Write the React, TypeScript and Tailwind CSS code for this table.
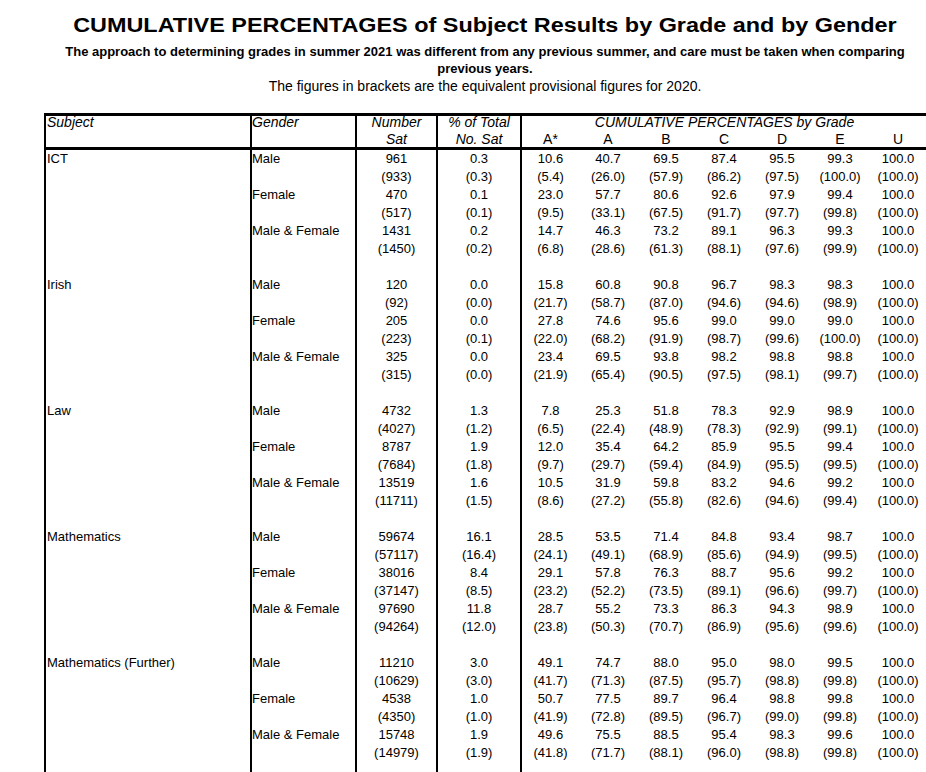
type Line = { sat: string; pct: string; grades: string[] }
type GenderRow = { gender: string; now: Line; prev: Line }
type Group = { subject: string; rows: GenderRow[] }

const mk = (sat: string, pct: string, g: string) => ({ sat, pct, grades: g.split(" ") })

const groups: Group[] = [
  {
    subject: "ICT",
    rows: [
      { gender: "Male", now: mk("961", "0.3", "10.6 40.7 69.5 87.4 95.5 99.3 100.0"), prev: mk("(933)", "(0.3)", "(5.4) (26.0) (57.9) (86.2) (97.5) (100.0) (100.0)") },
      { gender: "Female", now: mk("470", "0.1", "23.0 57.7 80.6 92.6 97.9 99.4 100.0"), prev: mk("(517)", "(0.1)", "(9.5) (33.1) (67.5) (91.7) (97.7) (99.8) (100.0)") },
      { gender: "Male & Female", now: mk("1431", "0.2", "14.7 46.3 73.2 89.1 96.3 99.3 100.0"), prev: mk("(1450)", "(0.2)", "(6.8) (28.6) (61.3) (88.1) (97.6) (99.9) (100.0)") },
    ],
  },
  {
    subject: "Irish",
    rows: [
      { gender: "Male", now: mk("120", "0.0", "15.8 60.8 90.8 96.7 98.3 98.3 100.0"), prev: mk("(92)", "(0.0)", "(21.7) (58.7) (87.0) (94.6) (94.6) (98.9) (100.0)") },
      { gender: "Female", now: mk("205", "0.0", "27.8 74.6 95.6 99.0 99.0 99.0 100.0"), prev: mk("(223)", "(0.1)", "(22.0) (68.2) (91.9) (98.7) (99.6) (100.0) (100.0)") },
      { gender: "Male & Female", now: mk("325", "0.0", "23.4 69.5 93.8 98.2 98.8 98.8 100.0"), prev: mk("(315)", "(0.0)", "(21.9) (65.4) (90.5) (97.5) (98.1) (99.7) (100.0)") },
    ],
  },
  {
    subject: "Law",
    rows: [
      { gender: "Male", now: mk("4732", "1.3", "7.8 25.3 51.8 78.3 92.9 98.9 100.0"), prev: mk("(4027)", "(1.2)", "(6.5) (22.4) (48.9) (78.3) (92.9) (99.1) (100.0)") },
      { gender: "Female", now: mk("8787", "1.9", "12.0 35.4 64.2 85.9 95.5 99.4 100.0"), prev: mk("(7684)", "(1.8)", "(9.7) (29.7) (59.4) (84.9) (95.5) (99.5) (100.0)") },
      { gender: "Male & Female", now: mk("13519", "1.6", "10.5 31.9 59.8 83.2 94.6 99.2 100.0"), prev: mk("(11711)", "(1.5)", "(8.6) (27.2) (55.8) (82.6) (94.6) (99.4) (100.0)") },
    ],
  },
  {
    subject: "Mathematics",
    rows: [
      { gender: "Male", now: mk("59674", "16.1", "28.5 53.5 71.4 84.8 93.4 98.7 100.0"), prev: mk("(57117)", "(16.4)", "(24.1) (49.1) (68.9) (85.6) (94.9) (99.5) (100.0)") },
      { gender: "Female", now: mk("38016", "8.4", "29.1 57.8 76.3 88.7 95.6 99.2 100.0"), prev: mk("(37147)", "(8.5)", "(23.2) (52.2) (73.5) (89.1) (96.6) (99.7) (100.0)") },
      { gender: "Male & Female", now: mk("97690", "11.8", "28.7 55.2 73.3 86.3 94.3 98.9 100.0"), prev: mk("(94264)", "(12.0)", "(23.8) (50.3) (70.7) (86.9) (95.6) (99.6) (100.0)") },
    ],
  },
  {
    subject: "Mathematics (Further)",
    rows: [
      { gender: "Male", now: mk("11210", "3.0", "49.1 74.7 88.0 95.0 98.0 99.5 100.0"), prev: mk("(10629)", "(3.0)", "(41.7) (71.3) (87.5) (95.7) (98.8) (99.8) (100.0)") },
      { gender: "Female", now: mk("4538", "1.0", "50.7 77.5 89.7 96.4 98.8 99.8 100.0"), prev: mk("(4350)", "(1.0)", "(41.9) (72.8) (89.5) (96.7) (99.0) (99.8) (100.0)") },
      { gender: "Male & Female", now: mk("15748", "1.9", "49.6 75.5 88.5 95.4 98.3 99.6 100.0"), prev: mk("(14979)", "(1.9)", "(41.8) (71.7) (88.1) (96.0) (98.8) (99.8) (100.0)") },
    ],
  },
]

const grades = ["A*", "A", "B", "C", "D", "E", "U"]

function DataRow({ subject, gender, line }: { subject?: string; gender?: string; line?: Line }) {
  return (
    <tr className="h-[18px] leading-[18px] align-top">
      <td className="border-l-2 border-black pl-[1px]">{subject}</td>
      <td className="border-l-2 border-black">{gender}</td>
      <td className="border-l-2 border-black text-center">{line?.sat}</td>
      <td className="border-l-2 border-black text-center">{line?.pct}</td>
      {grades.map((g, i) => (
        <td key={g} className={i === 0 ? "border-l-2 border-black text-center" : "text-center"}>
          {line?.grades[i]}
        </td>
      ))}
    </tr>
  )
}

export default function App() {
  return (
    <div className="w-[926px] h-[772px] overflow-hidden bg-white pl-[44px] text-black font-['Liberation_Sans',Arial,sans-serif]">
      <div className="text-center pt-[13px]">
        <h1 className="inline-block text-[20px] leading-[24px] font-bold scale-x-[1.17]">
          CUMULATIVE PERCENTAGES of Subject Results by Grade and by Gender
        </h1>
        <p className="mt-[4px] text-[13px] leading-[17px] font-bold">
          The approach to determining grades in summer 2021 was different from any previous summer, and care must be taken when comparing
          <br />
          previous years.
        </p>
        <p className="text-[14px] leading-[18px]">The figures in brackets are the equivalent provisional figures for 2020.</p>
      </div>

      <table className="mt-[18px] w-[882px] table-fixed border-collapse text-[13px]">
        <colgroup>
          <col className="w-[206px]" />
          <col className="w-[105px]" />
          <col className="w-[81px]" />
          <col className="w-[84px]" />
          {grades.map((g) => (
            <col key={g} className="w-[58px]" />
          ))}
        </colgroup>
        <thead className="text-[14px] leading-[15px]">
          <tr className="h-[17px]">
            <th rowSpan={2} className="border-l-2 border-t-[3px] border-b-[3px] border-black pl-[1px] text-left align-top font-normal italic">
              <div className="-mt-[1px]">Subject</div>
            </th>
            <th rowSpan={2} className="border-l-2 border-t-[3px] border-b-[3px] border-black text-left align-top font-normal italic">
              <div className="-mt-[1px]">Gender</div>
            </th>
            <th rowSpan={2} className="border-l-2 border-t-[3px] border-b-[3px] border-black text-center align-top font-normal italic">
              <div className="-mt-[1px]">Number</div>
              <div className="mt-[2px]">Sat</div>
            </th>
            <th rowSpan={2} className="border-l-2 border-t-[3px] border-b-[3px] border-black text-center align-top font-normal italic">
              <div className="-mt-[1px]">% of Total</div>
              <div className="mt-[2px]">No. Sat</div>
            </th>
            <th colSpan={7} className="border-l-2 border-t-[3px] border-black text-center align-top font-normal italic">
              <div className="-mt-[1px]">CUMULATIVE PERCENTAGES by Grade</div>
            </th>
          </tr>
          <tr className="h-[16px]">
            {grades.map((g, i) => (
              <th key={g} className={i === 0 ? "border-l-2 border-b-[3px] border-black text-center align-top font-normal" : "border-b-[3px] border-black text-center align-top font-normal"}>
                {g}
              </th>
            ))}
          </tr>
        </thead>
        <tbody>
          {groups.map((grp) => [
            ...grp.rows.flatMap((r, ri) => [
              <DataRow key={`${grp.subject}-${ri}-a`} subject={ri === 0 ? grp.subject : undefined} gender={r.gender} line={r.now} />,
              <DataRow key={`${grp.subject}-${ri}-b`} line={r.prev} />,
            ]),
            <DataRow key={`${grp.subject}-gap`} />,
          ])}
        </tbody>
      </table>
    </div>
  )
}
